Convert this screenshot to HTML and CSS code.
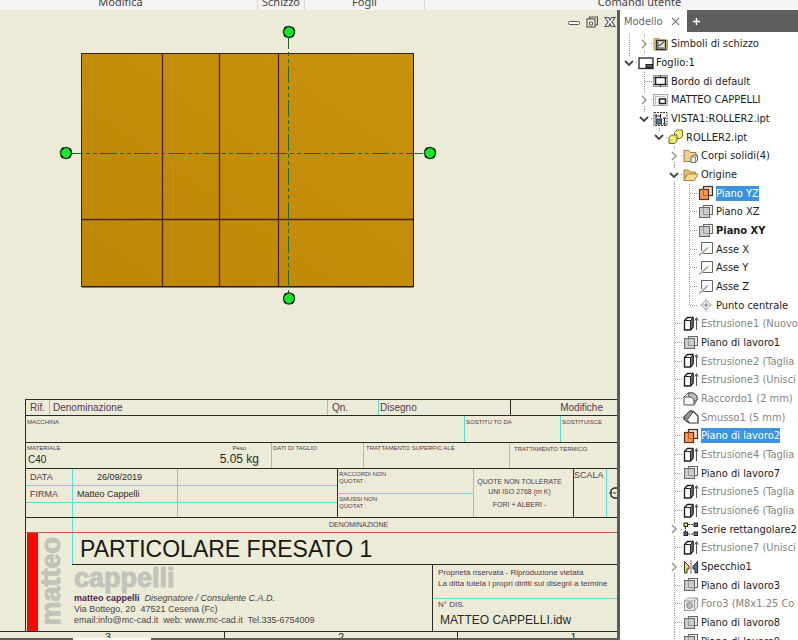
FILE: index.html
```html
<!DOCTYPE html>
<html lang="it">
<head>
<meta charset="utf-8">
<title>MATTEO CAPPELLI.idw</title>
<link rel="stylesheet" href="styles.css">
</head>
<body>
<svg class="sprite" aria-hidden="true">
  <symbol id="i-symbols" viewBox="0 0 16 16">
    <path d="M1 2.500h5l1 1.500h7.500v10H1z" fill="#f2cf80" stroke="#b9975a"/>
    <rect x="3.500" y="4.500" width="9" height="9" fill="#e9e6dc" stroke="#333" stroke-width="1.500"/>
    <path d="M5 6v6h6M6 10l5-4" fill="none" stroke="#555" stroke-width="1.200"/>
  </symbol>
  <symbol id="i-sheet" viewBox="0 0 16 16">
    <rect x="1" y="3" width="14" height="10.500" fill="#fff" stroke="#333" stroke-width="1.400"/>
    <path d="M7.500 9H15v4.500H7.500z" fill="#222"/><path d="M9 11h5" stroke="#999"/>
  </symbol>
  <symbol id="i-border" viewBox="0 0 16 16">
    <rect x=".5" y="2.500" width="14" height="11" fill="#eee" stroke="#999"/>
    <rect x="2.500" y="4.500" width="10" height="7" fill="#fff" stroke="#222" stroke-width="1.500"/>
    <path d="M1 4.500h2M12 4.500h2M1 11.500h2M12 11.500h2M7.500 2.500v2M7.500 11.500v2" stroke="#222"/>
  </symbol>
  <symbol id="i-title" viewBox="0 0 16 16">
    <rect x=".5" y="2.500" width="14" height="11" fill="#f4f4f4" stroke="#aaa"/>
    <path d="M2.500 4v8M2.500 4.500H12" stroke="#bbb"/>
    <rect x="6.500" y="7" width="6" height="4.500" fill="#fff" stroke="#222" stroke-width="1.500"/>
  </symbol>
  <symbol id="i-view" viewBox="0 0 16 16">
    <rect x="1" y="1.500" width="13" height="13" fill="#fff" stroke="#333" stroke-dasharray="2 1"/>
    <path d="M3 3v4M7.500 3v4M3 5h4.500M11.500 7v6M10 7h3M10 13h3" stroke="#222" stroke-width="1.200"/>
    <rect x="3" y="8" width="5.500" height="5" fill="#5b7493" stroke="#234"/>
  </symbol>
  <symbol id="i-part" viewBox="0 0 16 16">
    <path d="M6.500 3.500l2.500-2.500h5.500v6.500l-2.500 2H6.500z" fill="#efea78" stroke="#7c7a20"/>
    <path d="M1 8.500l2.500-2.500h5.500v5.500l-2.500 3H1z" fill="#e9e25c" stroke="#6f6d1a"/>
    <path d="M7.500 4h4v5M2 9h4v5" fill="none" stroke="#fffbc8"/>
  </symbol>
  <symbol id="i-bodies" viewBox="0 0 16 16">
    <path d="M1 13.500V2.500h5l1.500 2H13v9z" fill="#f0cf92" stroke="#9b7a45"/>
    <path d="M8 9l2-2h4.500v5l-2 2.500H8z" fill="#eee" stroke="#666"/>
    <path d="M8 9h4.500v5M12.500 9l2-2" fill="none" stroke="#888"/>
  </symbol>
  <symbol id="i-folder" viewBox="0 0 16 16">
    <path d="M1 13V3h4.500l1.500 2h5.500v2" fill="#e5bb70" stroke="#a98545"/>
    <path d="M1 13.500L4.500 7H15l-3.500 6.500z" fill="#f7d999" stroke="#a98545"/>
  </symbol>
  <symbol id="i-plane-on" viewBox="0 0 16 16">
    <rect x="5.500" y="1.500" width="9" height="9" fill="#f6d9bd" stroke="#333" stroke-width="1.200"/>
    <rect x="1.500" y="4.500" width="9" height="10" fill="#f39a59" stroke="#5b3019" stroke-width="1.200"/>
    <path d="M5.500 4.500v6h5" fill="none" stroke="#ba5e25"/>
  </symbol>
  <symbol id="i-plane" viewBox="0 0 16 16">
    <rect x="5.500" y="1.500" width="9" height="9" fill="#ececec" stroke="#666"/>
    <rect x="1.500" y="3.500" width="10" height="10" fill="#ccc" stroke="#666"/>
    <path d="M5.500 3.500v7h6" fill="none" stroke="#999"/>
  </symbol>
  <symbol id="i-axis" viewBox="0 0 16 16">
    <path d="M3.500 10V1.500h11v11H5" fill="#fafafa" stroke="#666"/>
    <path d="M1 14.500L10 6.500" stroke="#999" stroke-width="1.300"/>
  </symbol>
  <symbol id="i-point" viewBox="0 0 16 16">
    <path d="M8 3l5 5-5 5-5-5z" fill="#eee" stroke="#aaa"/>
    <path d="M8 1v14M1.500 8h13" stroke="#bbb"/><circle cx="8" cy="8" r="1.500" fill="#999"/>
  </symbol>
  <symbol id="i-extrude" viewBox="0 0 16 16">
    <path d="M1.500 4.500l3-3H10v9.500l-2.500 3h-6z" fill="#fff" stroke="#222" stroke-width="1.400"/>
    <path d="M7.500 4.500L10 2v9l-2.500 3z" fill="#777" stroke="#222"/>
    <path d="M1.500 4.500h6v9" fill="none" stroke="#222"/>
    <path d="M13.500 14V3M12 4.500l1.500-3 1.500 3" fill="none" stroke="#555"/>
  </symbol>
  <symbol id="i-fillet" viewBox="0 0 16 16">
    <path d="M1 6l4-4h5q4 1 4.500 6l-3.500 6H1z" fill="#f5f5f5" stroke="#555"/>
    <path d="M5 2h5q4 1 4.500 6L11 11Q11 6 6 6z" fill="#bbb" stroke="#555"/><path d="M1 6h5M11 11v3" stroke="#555"/>
  </symbol>
  <symbol id="i-chamfer" viewBox="0 0 16 16">
    <path d="M1 8l6-6h3l5 5v7H6L1 10z" fill="#fff" stroke="#333" stroke-width="1.200"/>
    <path d="M1 8l6-6 3 1-5.500 7.500z" fill="#999" stroke="#444"/><path d="M4.500 10.500L6 14" stroke="#444"/>
  </symbol>
  <symbol id="i-pattern" viewBox="0 0 16 16">
    <path d="M5 3.500h6M5 13h6M2.500 6v5" stroke="#333" stroke-dasharray="2 1"/>
    <rect x="1" y="2" width="3.500" height="3.500" fill="#eadf5a" stroke="#222"/>
    <rect x="11" y="2" width="3.500" height="3.500" fill="#666" stroke="#222"/>
    <rect x="1" y="11" width="3.500" height="3.500" fill="#5f67c0" stroke="#222"/>
    <rect x="11" y="11" width="3.500" height="3.500" fill="#777" stroke="#222"/>
  </symbol>
  <symbol id="i-mirror" viewBox="0 0 16 16">
    <path d="M1.500 14V2.500L6 7v3H4v4z" fill="#efe243" stroke="#333"/>
    <path d="M14.500 14V2.500L10 7v3h2v4z" fill="#527082" stroke="#234"/>
    <path d="M8 1v14" stroke="#d06a70" stroke-width="1.200"/>
  </symbol>
  <symbol id="i-hole" viewBox="0 0 16 16">
    <path d="M1.500 5l3-3h10v9l-3 3.500h-10z" fill="#eee" stroke="#999"/>
    <path d="M1.500 5h10v9M11.500 5l3-3" fill="none" stroke="#999"/><circle cx="6.500" cy="9.500" r="3" fill="#bbb" stroke="#888"/>
  </symbol>
  <symbol id="c-right" viewBox="0 0 12 12"><path d="M4 2l4 4-4 4" fill="none" stroke="#999" stroke-width="1.600"/></symbol>
  <symbol id="c-down" viewBox="0 0 12 12"><path d="M2 4l4 4 4-4" fill="none" stroke="#444" stroke-width="1.800"/></symbol>
</svg>

<div class="app">
  <header class="ribbon">
    <span class="group modify">Modifica</span>
    <span class="group sketch">Schizzo</span>
    <span class="group sheets">Fogli</span>
    <span class="group user">Comandi utente</span>
  </header>

  <div class="work">
    <main class="canvas">
      <div class="window-buttons">
        <button aria-label="Riduci a icona"><svg viewBox="0 0 12 12"><rect x=".5" y="5.500" width="11" height="3" rx="1" fill="#fff" stroke="#555"/></svg></button>
        <button aria-label="Ripristina"><svg viewBox="0 0 12 12"><path d="M3.500 3V1h8v8H9" fill="none" stroke="#555" stroke-width="1.200"/><rect x="1" y="3" width="8" height="8" fill="#f5f5ea" stroke="#555" stroke-width="1.200"/><path d="M3.500 6h3v3h-3z" fill="none" stroke="#555"/></svg></button>
        <button aria-label="Chiudi"><svg viewBox="0 0 12 12"><path d="M1 1.500h3.500L6 4l1.500-2.500H11L8 6l3 4.500H7.500L6 8l-1.500 2.500H1L4 6z" fill="#fff" stroke="#555" stroke-width="1.200"/></svg></button>
      </div>

      <svg class="drawing" viewBox="56 20 384 290" role="img" aria-label="Vista del pezzo">
        <defs>
          <linearGradient id="face" x1="0" y1="1" x2="1" y2="0"><stop offset="0" stop-color="#c08606"/><stop offset="1" stop-color="#c8920c"/></linearGradient>
        </defs>
        <rect x="81.500" y="53.500" width="332" height="233" fill="url(#face)" stroke="#3a2418"/>
        <path d="M162.500 54v232M219.500 54v232M278.500 54v232M82 219.500h331" stroke="#4a2414" stroke-width="1.300"/>
        <path d="M413.500 54v233H82" fill="none" stroke="#1c1208"/>
        <path d="M66 153.500h364" stroke="#1d6a26" stroke-dasharray="17 3 4 3 4 3"/>
        <path d="M288.500 32v266" stroke="#1d6a26" stroke-dasharray="17 3 4 3 4 3"/>
        <g fill="#17e62b" stroke="#124a12" stroke-width="1.400">
          <circle cx="289" cy="32" r="5.500"/><circle cx="289" cy="298.500" r="5.500"/>
          <circle cx="66" cy="153" r="5.500"/><circle cx="430" cy="153" r="5.500"/>
        </g>
        <g fill="none" stroke="#000" stroke-width="1.600" stroke-dasharray="2.500 6.140" stroke-dashoffset="-3">
          <circle cx="289" cy="32" r="5.500"/><circle cx="289" cy="298.500" r="5.500"/>
          <circle cx="66" cy="153" r="5.500"/><circle cx="430" cy="153" r="5.500"/>
        </g>
      </svg>

      <section class="title-block">
        <div class="row head">
          <div class="w-rif">Rif.</div><div class="w-den cy">Denominazione</div><div class="w-qn cy">Qn.</div><div class="w-dis cy">Disegno</div><div class="w-mod bk">Modifiche</div>
        </div>
        <div class="row machine tiny">
          <div class="w-mac">MACCHINA</div><div class="w-sda cy">SOSTITU TO DA</div><div class="rest cy">SOSTITUISCE</div>
        </div>
        <div class="row material tiny">
          <div class="w-mat"><span>MATERIALE<b>C40</b></span><span class="weight">Peso<b>5.05 kg</b></span></div>
          <div class="w-cut cy">DATI DI TAGLIO</div><div class="w-sup cy">TRATTAMENTO SUPERFIC ALE</div><div class="rest ter cy">TRATTAMENTO TERMICO</div>
        </div>
        <div class="row data">
          <div class="sign">
            <div class="name purple">DATA</div><div class="date">26/09/2019</div><div></div>
            <div class="name purple">FIRMA</div><div>Matteo Cappelli</div><div></div>
            <div></div><div></div><div></div>
          </div>
          <div class="radii tiny bk"><div>RACCORDI NON<br>QUOTAT :</div><div>SMUSSI NON<br>QUOTAT :</div></div>
          <div class="tolerance cy"><span>QUOTE NON TOLLERATE</span><span>UNI ISO 2768 (m K)</span><span class="fits">FORI + ALBERI -</span></div>
          <div class="scale bk">SCALA</div>
          <div class="projection cy"><svg viewBox="0 0 12 12"><path d="M0 6h12" stroke="#333" stroke-dasharray="3 1"/><path d="M12 1H5L2 3v6l3 2h7" fill="none" stroke="#222" stroke-width="1.300"/></svg></div>
        </div>
        <div class="row caption"><div class="stub"></div><div class="caption-text">DENOMINAZIONE</div></div>
        <div class="row identity">
          <div class="bar"></div>
          <div class="first-name"><span>matteo</span></div>
          <div class="details">
            <h1>PARTICOLARE FRESATO 1</h1>
            <div class="lower">
              <div class="company">
                <div class="last-name">cappelli</div>
                <p><strong>matteo cappelli</strong>&nbsp; <em>Disegnatore / Consulente C.A.D.</em></p>
                <p>Via Bottego, 20&nbsp; 47521 Cesena (Fc)</p>
                <p>email:info@mc-cad.it&nbsp; web: www.mc-cad.it&nbsp; Tel.335-6754009</p>
              </div>
              <div class="rights">
                <div class="notice"><p>Proprietà riservata - Riproduzione vietata</p><p>La ditta tutela i propri diritti sui disegni a termine</p></div>
                <div class="number"><p>N° DIS.</p><p class="file">MATTEO CAPPELLI.idw</p></div>
              </div>
            </div>
          </div>
        </div>
      </section>
      <div class="zones"><span>3</span><span>2</span><span>1</span></div>
      <div class="scroll"><div class="thumb"></div></div>
    </main>

    <aside class="browser">
      <div class="tabs">
        <div class="tab"><button class="tab-name">Modello</button><button class="close" aria-label="Chiudi scheda"><svg viewBox="0 0 10 10"><path d="M1 1l8 8M9 1L1 9" stroke="#777" stroke-width="1.300"/></svg></button></div>
        <button class="add" aria-label="Aggiungi scheda"><svg viewBox="0 0 10 10"><path d="M5 1v8M1 5h8" stroke="#fff" stroke-width="1.600"/></svg></button>
      </div>
      <ul class="tree">
        <li><i class="guide"></i><button class="twig" aria-label="Espandi"><svg><use href="#c-right"/></svg></button><svg class="icon"><use href="#i-symbols"/></svg><span>Simboli di schizzo</span></li>
        <li><button class="twig last" aria-label="Comprimi"><svg><use href="#c-down"/></svg></button><svg class="icon"><use href="#i-sheet"/></svg><span>Foglio:1</span></li>
        <li class="l1"><i class="twig"></i><svg class="icon"><use href="#i-border"/></svg><span>Bordo di default</span></li>
        <li class="l1"><button class="twig" aria-label="Espandi"><svg><use href="#c-right"/></svg></button><svg class="icon"><use href="#i-title"/></svg><span>MATTEO CAPPELLI</span></li>
        <li class="l1"><button class="twig last" aria-label="Comprimi"><svg><use href="#c-down"/></svg></button><svg class="icon"><use href="#i-view"/></svg><span>VISTA1:ROLLER2.ipt</span></li>
        <li class="l2"><button class="twig last" aria-label="Comprimi"><svg><use href="#c-down"/></svg></button><svg class="icon"><use href="#i-part"/></svg><span>ROLLER2.ipt</span></li>
        <li class="l3"><button class="twig" aria-label="Espandi"><svg><use href="#c-right"/></svg></button><svg class="icon"><use href="#i-bodies"/></svg><span>Corpi solidi(4)</span></li>
        <li class="l3"><button class="twig" aria-label="Comprimi"><svg><use href="#c-down"/></svg></button><svg class="icon"><use href="#i-folder"/></svg><span>Origine</span></li>
        <li class="l3"><i class="guide"></i><i class="twig"></i><svg class="icon"><use href="#i-plane-on"/></svg><span class="selected">Piano YZ</span></li>
        <li class="l3"><i class="guide"></i><i class="twig"></i><svg class="icon"><use href="#i-plane"/></svg><span>Piano XZ</span></li>
        <li class="l3"><i class="guide"></i><i class="twig"></i><svg class="icon"><use href="#i-plane"/></svg><strong>Piano XY</strong></li>
        <li class="l3"><i class="guide"></i><i class="twig"></i><svg class="icon"><use href="#i-axis"/></svg><span>Asse X</span></li>
        <li class="l3"><i class="guide"></i><i class="twig"></i><svg class="icon"><use href="#i-axis"/></svg><span>Asse Y</span></li>
        <li class="l3"><i class="guide"></i><i class="twig"></i><svg class="icon"><use href="#i-axis"/></svg><span>Asse Z</span></li>
        <li class="l3"><i class="guide"></i><i class="twig last"></i><svg class="icon"><use href="#i-point"/></svg><span>Punto centrale</span></li>
        <li class="l3 off"><i class="twig"></i><svg class="icon"><use href="#i-extrude"/></svg><span>Estrusione1 (Nuovo</span></li>
        <li class="l3"><i class="twig"></i><svg class="icon"><use href="#i-plane"/></svg><span>Piano di lavoro1</span></li>
        <li class="l3 off"><i class="twig"></i><svg class="icon"><use href="#i-extrude"/></svg><span>Estrusione2 (Taglia</span></li>
        <li class="l3 off"><i class="twig"></i><svg class="icon"><use href="#i-extrude"/></svg><span>Estrusione3 (Unisci</span></li>
        <li class="l3 off"><i class="twig"></i><svg class="icon"><use href="#i-fillet"/></svg><span>Raccordo1 (2 mm)</span></li>
        <li class="l3 off"><i class="twig"></i><svg class="icon"><use href="#i-chamfer"/></svg><span>Smusso1 (5 mm)</span></li>
        <li class="l3"><i class="twig"></i><svg class="icon"><use href="#i-plane-on"/></svg><span class="selected">Piano di lavoro2</span></li>
        <li class="l3 off"><i class="twig"></i><svg class="icon"><use href="#i-extrude"/></svg><span>Estrusione4 (Taglia</span></li>
        <li class="l3"><i class="twig"></i><svg class="icon"><use href="#i-plane"/></svg><span>Piano di lavoro7</span></li>
        <li class="l3 off"><i class="twig"></i><svg class="icon"><use href="#i-extrude"/></svg><span>Estrusione5 (Taglia</span></li>
        <li class="l3 off"><i class="twig"></i><svg class="icon"><use href="#i-extrude"/></svg><span>Estrusione6 (Taglia</span></li>
        <li class="l3"><button class="twig" aria-label="Espandi"><svg><use href="#c-right"/></svg></button><svg class="icon"><use href="#i-pattern"/></svg><span>Serie rettangolare2</span></li>
        <li class="l3 off"><i class="twig"></i><svg class="icon"><use href="#i-extrude"/></svg><span>Estrusione7 (Unisci</span></li>
        <li class="l3"><button class="twig" aria-label="Espandi"><svg><use href="#c-right"/></svg></button><svg class="icon"><use href="#i-mirror"/></svg><span>Specchio1</span></li>
        <li class="l3"><i class="twig"></i><svg class="icon"><use href="#i-plane"/></svg><span>Piano di lavoro3</span></li>
        <li class="l3 off"><i class="twig"></i><svg class="icon"><use href="#i-hole"/></svg><span>Foro3 (M8x1.25 Co</span></li>
        <li class="l3"><i class="twig"></i><svg class="icon"><use href="#i-plane"/></svg><span>Piano di lavoro8</span></li>
        <li class="l3"><i class="twig"></i><svg class="icon"><use href="#i-plane"/></svg><span>Piano di lavoro9</span></li>
      </ul>
    </aside>
  </div>
</div>
</body>
</html>
```
FILE: styles.css
```css
:root {
  --paper: #ecebd8;
  --cyan: #58e0d8;
  --ink: #2a2a26;
  --purple: #54384c;
  --frame: #5c5c5c;
}

* { box-sizing: border-box; }
body { margin: 0; }
p, h1, ul { margin: 0; padding: 0; }
button { padding: 0; border: 0; background: none; font: inherit; color: inherit; }
svg { display: block; }
.sprite { position: absolute; width: 0; height: 0; }

.app { display: flex; flex-direction: column; height: 100vh; overflow: hidden; }

/* Ribbon */
.ribbon {
  display: flex;
  flex: none;
  height: 10px;
  overflow: hidden;
  background: #f5f4f5;
  color: #444;
  font: 11px/12px "Noto Sans", sans-serif;
}
.group {
  display: flex;
  align-items: flex-end;
  justify-content: center;
  padding-bottom: 2px;
  border-right: 1px solid #d8d8d8;
  white-space: nowrap;
}
.modify { width: 258px; padding-right: 16px; }
.sketch { width: 47px; }
.sheets { width: 120px; }
.user { flex: 1; border: 0; padding-left: 56px; }

.work { display: flex; flex: 1; min-height: 0; }

/* Drawing sheet */
.canvas {
  position: relative;
  display: flex;
  flex: 1;
  flex-direction: column;
  min-width: 0;
  overflow: hidden;
  background: var(--paper);
  font-family: "Liberation Sans", Arial, sans-serif;
  color: var(--ink);
  white-space: nowrap;
}
.window-buttons { position: absolute; top: 6px; right: 1px; display: flex; gap: 6px; }
.window-buttons svg { width: 12px; height: 12px; }
.drawing { flex: none; width: 384px; height: 290px; margin: 10px 0 0 56px; }

.title-block {
  margin: auto 0 0 25px;
  border-left: 1px solid var(--ink);
}
.row { display: flex; border-top: 1px solid var(--ink); }
.row > div { flex: none; }
.row > .rest { flex: 1; }
.cy { border-left: 1px solid var(--cyan); }
.bk { border-left: 1px solid var(--ink); }
.tiny { font-size: 6px; line-height: 7px; color: var(--purple); }
.purple { color: var(--purple); }

.head { height: 16px; font-size: 10px; line-height: 15px; color: var(--purple); }
.w-rif { width: 23px; padding-left: 4px; }
.w-den { width: 278px; padding-left: 3px; }
.w-qn { width: 51px; padding-left: 4px; }
.w-dis { width: 132px; padding-left: 1px; }
.head > .w-mod { flex: 1; padding-right: 14px; text-align: right; }

.machine { height: 27px; }
.machine > div { padding: 3px 1px; }
.w-mac { width: 438px; }
.w-sda { width: 96px; }

.material { height: 26px; }
.material > div { padding: 2px 1px; }
.w-mat { display: flex; justify-content: space-between; width: 245px; }
.w-mat span { display: flex; flex-direction: column; }
.w-mat b { padding: 1px; font: 10px/14px "Liberation Sans", Arial, sans-serif; color: var(--ink); }
.w-mat .weight { align-items: center; padding-right: 11px; }
.w-mat .weight b { padding: 0; font-size: 12px; }
.w-cut { width: 92px; }
.w-sup { width: 146px; }
.material > .w-sup { padding-left: 2px; }
.material > .ter { padding: 3px 4px; }

.data { height: 49px; font-size: 9px; line-height: 16px; }
.sign { display: grid; grid-template-columns: 46px 105px 160px; grid-template-rows: 17px 17px 14px; }
.sign > div { padding-left: 4px; border-left: 1px solid var(--cyan); border-bottom: 1px solid var(--cyan); }
.sign > div:nth-child(3n+1) { border-left: 0; }
.sign > div:nth-child(n+7) { border-bottom: 0; }
.sign > .date { padding-left: 24px; }
.radii { display: grid; grid-template-rows: 25px 1fr; width: 136px; }
.radii > div { padding: 2px 1px; }
.radii > div:first-child { border-bottom: 1px solid var(--cyan); }
.tolerance {
  display: flex;
  flex-direction: column;
  align-items: center;
  width: 100px;
  padding: 8px 8px 0 0;
  font-size: 7px;
  line-height: 10px;
  color: var(--purple);
}
.fits { padding-top: 3px; }
.scale { width: 33px; color: var(--purple); line-height: 13px; }
.row > .projection { flex: 1; padding: 18px 0 0 2px; }
.projection svg { width: 12px; height: 12px; }

.caption { height: 15px; font-size: 7px; line-height: 14px; color: var(--purple); }
.stub { width: 46px; }
.row > .caption-text { flex: 1; padding-left: 256px; border-left: 1px solid var(--cyan); }

.identity { height: 99px; border-top-color: #c8584a; }
.bar { width: 11px; margin-left: 1px; background: #f50a05; }
.first-name, .last-name { font-weight: bold; font-size: 27px; line-height: 27px; color: #c3c3bb; -webkit-text-stroke: 1px #c3c3bb; }
.first-name { display: flex; align-items: center; width: 34px; padding-bottom: 2px; }
.first-name span { writing-mode: vertical-rl; transform: rotate(180deg); }
.row > .details { display: flex; flex: 1; flex-direction: column; }
h1 { height: 31px; padding-left: 7px; border-left: 1px solid var(--cyan); font-size: 23px; line-height: 32px; font-weight: normal; color: #181812; }
.lower { display: flex; flex: 1; min-height: 0; border-top: 1px solid var(--ink); }
.company { width: 360px; padding-left: 2px; font-size: 9px; line-height: 11px; color: #4a4446; }
.last-name { height: 28px; }
.company strong { color: #4d1f58; }
.rights { display: flex; flex: 1; flex-direction: column; border-left: 1px solid var(--ink); font-size: 8px; color: var(--purple); }
.notice { flex: none; height: 34px; padding: 2px 5px; line-height: 11px; border-bottom: 1px solid var(--cyan); }
.number { padding: 1px 5px; line-height: 10px; }
.number .file { padding-left: 2px; font-size: 12px; line-height: 20px; color: var(--ink); }

.zones { display: grid; flex: none; grid-template-columns: 225px 233px 232px; height: 7px; overflow: hidden; border-top: 1px solid var(--ink); font-size: 11px; line-height: 11px; text-align: center; }
.zones span { border-right: 1px solid var(--ink); }
.zones span:first-child { padding-right: 8px; }
.scroll { flex: none; height: 2px; padding-left: 73px; background: var(--frame); }
.thumb { width: 78px; height: 2px; background: #fff; }

/* Model browser */
.browser {
  flex: none;
  width: 181px;
  overflow: hidden;
  border-left: 3px solid var(--frame);
  background: #fff;
  font: 11px/15px "DejaVu Sans Condensed", "DejaVu Sans", sans-serif;
  color: #1c1c1c;
}
.tabs { display: flex; height: 22px; background: #5e5e5e; }
.tab { display: flex; align-items: center; gap: 8px; width: 67px; padding-left: 4px; background: #fff; color: #666; }
.close svg, .add svg { width: 9px; height: 9px; }
.add { padding: 0 5px; }

.tree { padding: 2px 0 0 3px; list-style: none; }
.tree li { display: flex; align-items: center; height: 19px; white-space: nowrap; }
.tree li:nth-child(3n) { height: 18px; }
.tree .l1 { padding-left: 15px; }
.tree .l2 { padding-left: 30px; }
.tree .l3 { padding-left: 45px; }
.guide, .twig {
  flex: none;
  width: 15px;
  height: 100%;
  background: repeating-linear-gradient(#999 0 1px, transparent 1px 2px) 6px 0 / 1px 100% no-repeat;
}
.twig {
  display: flex;
  align-items: center;
  background:
    repeating-linear-gradient(#999 0 1px, transparent 1px 2px) 6px 0 / 1px 100% no-repeat,
    repeating-linear-gradient(90deg, #999 0 1px, transparent 1px 2px) 7px 50% / 8px 1px no-repeat;
}
.twig.last {
  background:
    repeating-linear-gradient(#999 0 1px, transparent 1px 2px) 6px 0 / 1px 50% no-repeat,
    repeating-linear-gradient(90deg, #999 0 1px, transparent 1px 2px) 7px 50% / 8px 1px no-repeat;
}
.twig svg { width: 12px; height: 12px; background: #fff; }
.icon { flex: none; width: 16px; height: 16px; margin-right: 2px; }
.off { color: #858585; }
.tree strong { font-weight: bold; }
.selected { background: #3b94df; color: #fff; }
```
